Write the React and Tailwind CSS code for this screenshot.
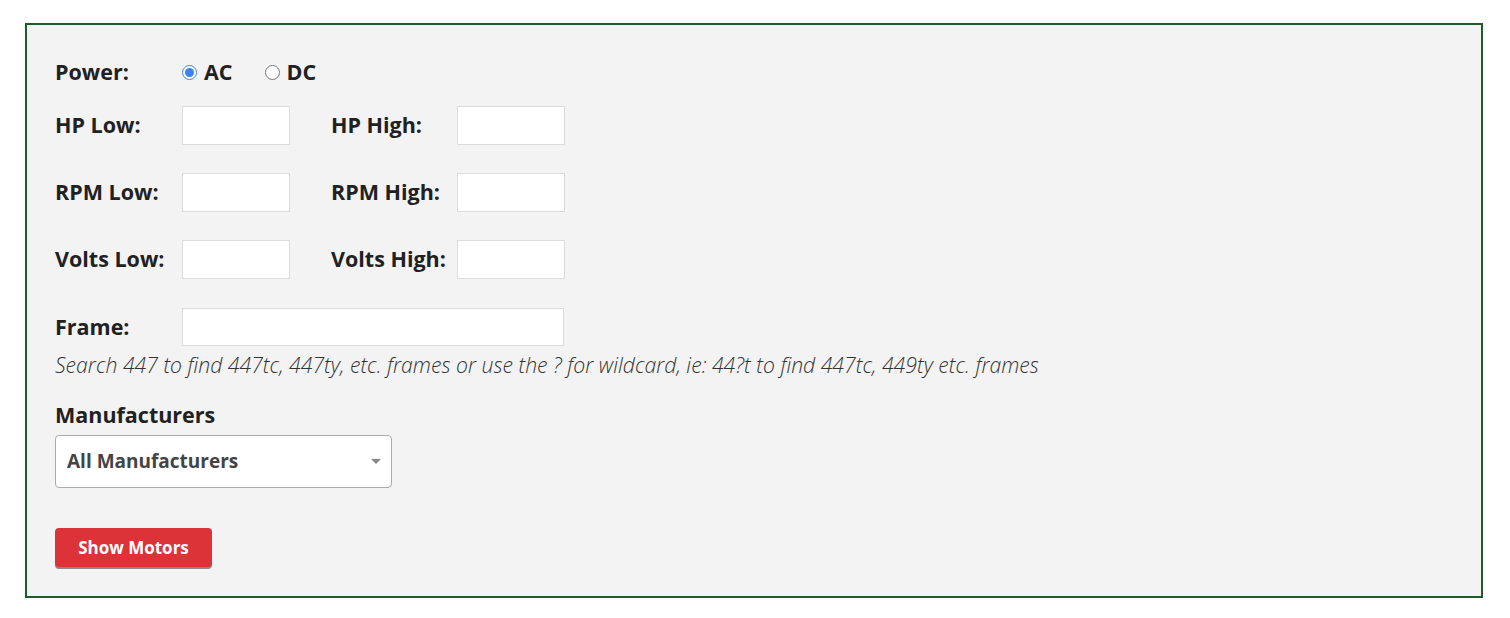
import React, { useState } from "react";

const labelCls = "text-[21.5px] font-bold text-[#212121]";

function Field({ label, wide }) {
  return (
    <div className="flex items-center">
      <label className={`w-[127px] ${labelCls}`}>{label}</label>
      <input
        type="text"
        className={`${wide ? "w-[382px] h-[38px]" : "w-[108px] h-[39px]"} bg-white border border-[#dcdcdc] outline-none px-2`}
      />
    </div>
  );
}

export default function App() {
  const [power, setPower] = useState("AC");

  const rows = [
    ["HP Low:", "HP High:"],
    ["RPM Low:", "RPM High:"],
    ["Volts Low:", "Volts High:"],
  ];

  return (
    <div className="min-h-screen bg-white pt-[23px] pl-[25px]" style={{ fontFamily: '"Open Sans", sans-serif' }}>
      <div className="w-[1458px] h-[575px] border-2 border-[#1d5a2c] bg-[#f3f3f3] pt-[33px] pl-[28px]">
        <div className="flex items-center h-[28px]">
          <span className={`w-[127px] ${labelCls}`}>Power:</span>
          <label className={`flex items-center gap-[7px] ${labelCls}`}>
            <input
              type="radio"
              name="power"
              checked={power === "AC"}
              onChange={() => setPower("AC")}
              className="w-[15px] h-[15px] m-0 accent-[#3b82f6]"
            />
            AC
          </label>
          <label className={`flex items-center gap-[7px] ml-[32px] ${labelCls}`}>
            <input
              type="radio"
              name="power"
              checked={power === "DC"}
              onChange={() => setPower("DC")}
              className="w-[15px] h-[15px] m-0 accent-[#3b82f6]"
            />
            DC
          </label>
        </div>

        <div className="mt-[20px] flex flex-col gap-[28px]">
          {rows.map(([a, b]) => (
            <div key={a} className="flex items-center">
              <Field label={a} />
              <div className="ml-[41px] flex items-center">
                <label className={`w-[126px] ${labelCls}`}>{b}</label>
                <input type="text" className="w-[108px] h-[39px] bg-white border border-[#dcdcdc] outline-none px-2" />
              </div>
            </div>
          ))}
        </div>

        <div className="mt-[29px]">
          <Field label="Frame:" wide />
        </div>
        <p className="mt-[5px] leading-[28px] text-[21.2px] italic font-light text-[#333]">
          Search 447 to find 447tc, 447ty, etc. frames or use the ? for wildcard, ie: 44?t to find 447tc, 449ty etc. frames
        </p>

        <div className={`mt-[22px] leading-[28px] ${labelCls}`}>Manufacturers</div>
        <div className="mt-[6px] w-[337px] h-[53px] bg-white border border-[#aaaaaa] rounded-[4px] flex items-center justify-between pl-[11px] pr-[10px]">
          <span className="text-[19px] font-bold text-[#444]">All Manufacturers</span>
          <span className="w-0 h-0 border-l-[5px] border-r-[5px] border-t-[5px] border-l-transparent border-r-transparent border-t-[#888]" />
        </div>

        <button
          type="button"
          className="mt-[40px] w-[157px] h-[39px] bg-[#db3338] rounded-[4px] text-white text-[17px] font-bold shadow-[0_2px_0_#8a8a8a]"
        >
          Show Motors
        </button>
      </div>
    </div>
  );
}
